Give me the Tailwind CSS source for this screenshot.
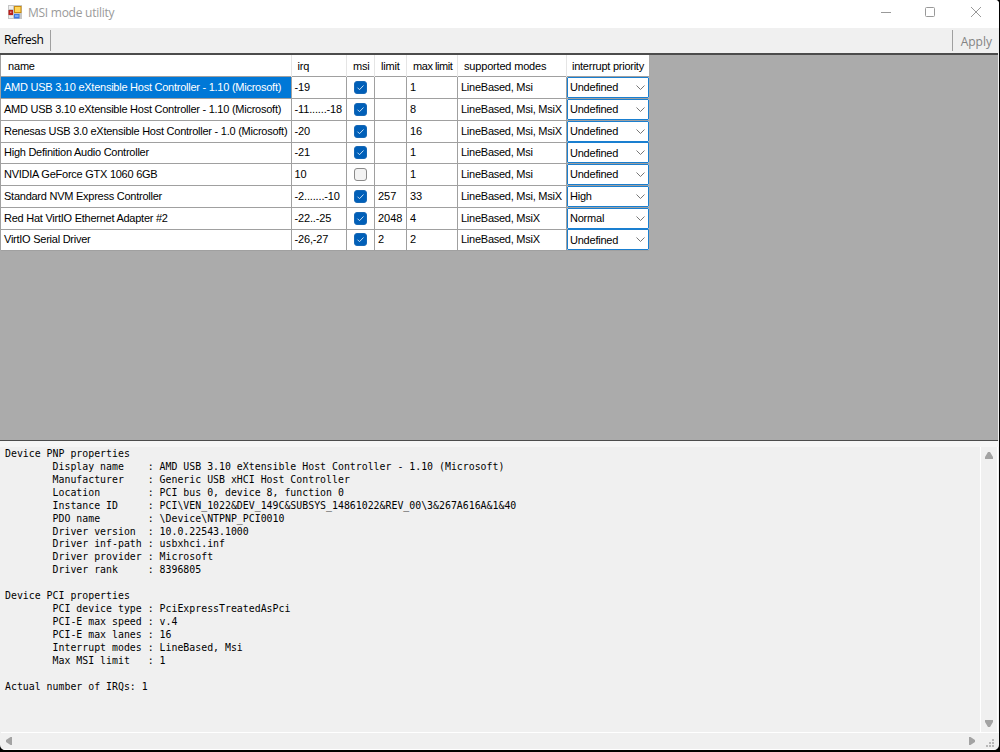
<!DOCTYPE html>
<html lang="en">
  <head>
    <meta charset="UTF-8" />
    <title>MSI mode utility</title>
    <script src="https://cdn.jsdelivr.net/npm/@tailwindcss/browser@4"></script>
  </head>
  <body class="bg-black overflow-hidden">
    <div class="w-[999px] h-[750px] flex flex-col bg-[#f0f0f0] rounded-tr-[4px] rounded-b-[5px] overflow-hidden text-black">
      <!-- title bar -->
      <header class="h-7 shrink-0 flex items-center bg-white pl-2">
        <svg class="w-[14px] h-[14px] -mt-1" viewBox="0 0 14 14">
          <rect width="14" height="14" fill="#c6c6c6" />
          <rect x="1" y="1" width="4" height="3" fill="#eee" />
          <rect x="1" y="10.5" width="4" height="2.5" fill="#eee" />
          <rect x="0.5" y="5" width="4.5" height="5" fill="#b8201c" />
          <rect x="2" y="6.5" width="1.5" height="1.5" fill="#ef8a80" />
          <rect x="6" y="1" width="7.5" height="7" fill="#c98b10" />
          <rect x="7" y="2" width="5.5" height="5" fill="#ffd65a" />
          <rect x="6" y="9" width="5.5" height="4.5" fill="#3d78e0" />
          <rect x="7" y="10" width="3.5" height="2" fill="#77aaf8" />
        </svg>
        <h1 class="ml-1.5 -mt-0.5 font-['Open_Sans',sans-serif] text-[12px] tracking-[-0.26px] text-[#9a9a9a] whitespace-nowrap">MSI mode utility</h1>
        <svg class="ml-auto mr-4 -mt-1 w-[104px] h-[12px]" viewBox="0 0 104 12" fill="none" stroke="#999">
          <path d="M2 6.5h10" />
          <rect x="46.5" y="1.5" width="9" height="9" rx="1" />
          <path d="M92 1l10 10M102 1l-10 10" />
        </svg>
      </header>

      <!-- toolbar -->
      <nav class="h-[25px] shrink-0 flex items-center font-['Open_Sans',sans-serif] text-[12px]">
        <button class="ml-1 w-[46px] text-left -mt-px tracking-[-0.5px]">Refresh</button>
        <div class="w-px h-[21px] bg-[#a0a0a0]"></div>
        <div class="ml-auto w-px h-[21px] bg-[#a0a0a0]"></div>
        <button class="w-[39px] mr-[7px] text-right text-[#838383] mt-0.5">Apply</button>
      </nav>

      <!-- grid -->
      <main class="h-[388px] w-[998px] shrink-0 bg-[#ababab] border-t-2 border-b border-[#4c4c4c] font-['Liberation_Sans',sans-serif] text-[11px]">
        <div class="w-[649px] h-[195px] border-l border-[#a0a0a0] bg-white">
          <div class="h-[21px] grid grid-cols-[290.5px_55.5px_28px_32px_51px_109px_82px] items-center whitespace-nowrap tracking-[-0.18px]">
            <div class="pl-[7px] h-full leading-[22px] border-r border-[#e5e5e5]">name</div>
            <div class="pl-[6px] h-full leading-[22px] border-r border-[#e5e5e5]">irq</div>
            <div class="pl-[6px] h-full leading-[22px] border-r border-[#e5e5e5]">msi</div>
            <div class="pl-[6px] h-full leading-[22px] border-r border-[#e5e5e5]">limit</div>
            <div class="pl-[6px] h-full leading-[22px] border-r border-[#e5e5e5] tracking-[-0.45px]">max limit</div>
            <div class="pl-[6px] h-full leading-[22px] border-r border-[#e5e5e5]">supported modes</div>
            <div class="pl-[5px] h-full leading-[22px] tracking-[-0.25px]">interrupt priority</div>
          </div>
          <div id="rows" class="border-t border-[#a0a0a0]"></div>
        </div>
      </main>

      <!-- details -->
      <section class="grow flex flex-col border-t-[6px] border-[#f6f6f6] pl-px">
        <div class="grow flex">
          <pre class="w-[979px] pl-1 pt-px font-['DejaVu_Sans_Mono',monospace] text-[9.9px] leading-[12.92px]">Device PNP properties
        Display name    : AMD USB 3.10 eXtensible Host Controller - 1.10 (Microsoft)
        Manufacturer    : Generic USB xHCI Host Controller
        Location        : PCI bus 0, device 8, function 0
        Instance ID     : PCI\VEN_1022&amp;DEV_149C&amp;SUBSYS_14861022&amp;REV_00\3&amp;267A616A&amp;1&amp;40
        PDO name        : \Device\NTPNP_PCI0010
        Driver version  : 10.0.22543.1000
        Driver inf-path : usbxhci.inf
        Driver provider : Microsoft
        Driver rank     : 8396805

Device PCI properties
        PCI device type : PciExpressTreatedAsPci
        PCI-E max speed : v.4
        PCI-E max lanes : 16
        Interrupt modes : LineBased, Msi
        Max MSI limit   : 1

Actual number of IRQs: 1</pre>
          <div class="w-[18px] border-x border-white flex flex-col justify-between items-center pt-[5px] pb-[5px]">
            <svg class="w-2 h-[7px]" viewBox="0 0 8 7"><path d="M3 0h2l3 5v2H0V5z" fill="#a3a3a3" /></svg>
            <svg class="w-2 h-[7px]" viewBox="0 0 8 7"><path d="M0 0h8v2L5 7H3L0 2z" fill="#a3a3a3" /></svg>
          </div>
        </div>
        <div class="h-[18px] shrink-0 border-y border-white flex items-center pl-[5px] pr-1">
          <svg class="w-[6px] h-2" viewBox="0 0 6 8"><path d="M6 0v8H4.500L0 5V3L4.500 0z" fill="#a3a3a3" /></svg>
          <svg class="ml-auto w-[6px] h-2" viewBox="0 0 6 8"><path d="M0 0v8h1.500L6 5V3L1.500 0z" fill="#a3a3a3" /></svg>
          <svg class="ml-[11px] mt-1 mr-px w-2 h-2" viewBox="0 0 8 8" fill="#b9b9b9">
            <path d="M6 0h2v2H6zM3 3h2v2H3zM6 3h2v2H6zM0 6h2v2H0zM3 6h2v2H3zM6 6h2v2H6z" />
          </svg>
        </div>
      </section>
    </div>

    <script>
      const devices = [
        ["AMD USB 3.10 eXtensible Host Controller - 1.10 (Microsoft)", "-19", true, "", "1", "LineBased, Msi", "Undefined"],
        ["AMD USB 3.10 eXtensible Host Controller - 1.10 (Microsoft)", "-11......-18", true, "", "8", "LineBased, Msi, MsiX", "Undefined"],
        ["Renesas USB 3.0 eXtensible Host Controller - 1.0 (Microsoft)", "-20", true, "", "16", "LineBased, Msi, MsiX", "Undefined"],
        ["High Definition Audio Controller", "-21", true, "", "1", "LineBased, Msi", "Undefined"],
        ["NVIDIA GeForce GTX 1060 6GB", "10", false, "", "1", "LineBased, Msi", "Undefined"],
        ["Standard NVM Express Controller", "-2.......-10", true, "257", "33", "LineBased, Msi, MsiX", "High"],
        ["Red Hat VirtIO Ethernet Adapter #2", "-22..-25", true, "2048", "4", "LineBased, MsiX", "Normal"],
        ["VirtIO Serial Driver", "-26,-27", true, "2", "2", "LineBased, MsiX", "Undefined"],
      ];
      const cell = "pl-[3px] h-full leading-[21px] border-r border-b border-[#a0a0a0]";

      function createRow([name, irq, msi, limit, max, modes, priority], i) {
        const selected = i === 0 ? "bg-[#0078d7] text-white" : "";
        const check = msi
          ? `<rect x="0.5" y="0.5" width="12" height="12" rx="2.5" fill="#005fb8" stroke="#1768b5"/><path d="M3.500 6.700l2 2 4-4.200" fill="none" stroke="#c9e0f5"/>`
          : `<rect x="0.5" y="0.5" width="12" height="12" rx="2.500" fill="#f3f3f3" stroke="#8a8a8a"/>`;
        return `
          <div class="h-[21.75px] grid grid-cols-[290.5px_55.5px_28px_32px_51px_109px_82px] whitespace-nowrap">
            <div class="${cell} tracking-[-0.25px] ${selected}">${name}</div>
            <div class="${cell} tracking-[-0.15px]">${irq}</div>
            <div class="h-full border-r border-b border-[#a0a0a0] flex items-center justify-center"><svg class="w-[13px] h-[13px]" viewBox="0 0 13 13">${check}</svg></div>
            <div class="${cell}">${limit}</div>
            <div class="${cell}">${max}</div>
            <div class="${cell} tracking-[-0.25px]">${modes}</div>
            <div class="h-full border-b border-[#a0a0a0]">
              <div class="h-full border border-[#1a7fd0] rounded-[1px] flex items-center justify-between pl-[2px] pr-[3px]">
                <span class="tracking-[-0.22px]">${priority}</span>
                <svg class="w-[9px] h-[5px]" viewBox="0 0 9 5"><path d="M0.500 0.500l4 4 4-4" fill="none" stroke="#777"/></svg>
              </div>
            </div>
          </div>`;
      }

      document.querySelector("#rows").innerHTML = devices.map(createRow).join("");
    </script>
  </body>
</html>
